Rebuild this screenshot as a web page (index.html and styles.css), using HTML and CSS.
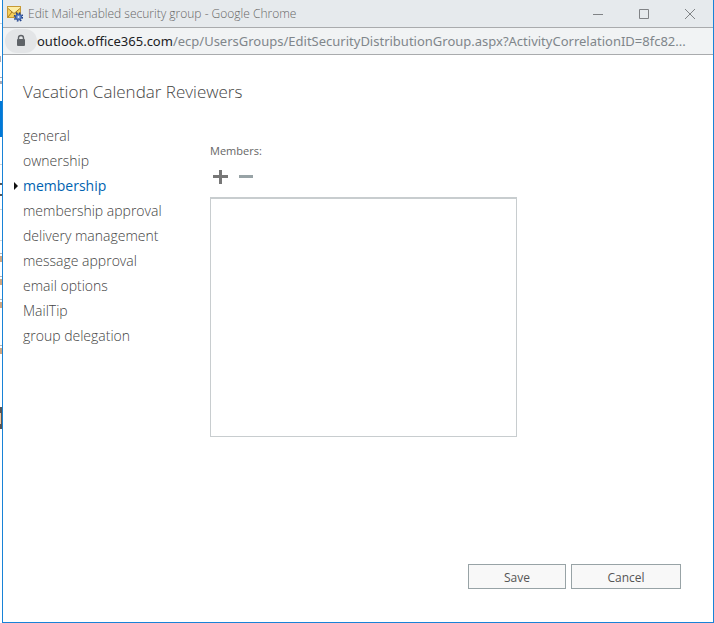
FILE: index.html
```html
<!DOCTYPE html>
<html lang="en">
<head>
  <meta charset="UTF-8" />
  <meta name="viewport" content="width=device-width, initial-scale=1" />
  <title>Edit Mail-enabled security group</title>
  <link rel="stylesheet" href="styles.css">
</head>
<body>
  <!-- edge of the page behind the popup -->
  <svg class="backdrop" width="2" height="623" aria-hidden="true" shape-rendering="crispEdges">
    <path d="M0 23h2v1H0z" fill="#d0d4d8"/>
    <path d="M0 56h1v6H0zM0 77h2v1H0zM0 81h2v3H0z" fill="#a9a9b4"/>
    <path d="M0 101h2v36H0z" fill="#0078d7"/>
    <path d="M0 164h2v1H0zM0 209h2v1H0zM0 240h2v1H0z" fill="#d4d4d4"/>
    <path d="M0 183h2v2H0zM0 194h2v2H0z" fill="#555"/>
    <path d="M0 253h2v1H0zM0 276h2v1H0zM0 299h2v1H0zM0 345h2v1H0z" fill="#b5b5b5"/>
    <path d="M0 256h2v6H0zM0 279h2v6H0zM0 302h2v6H0zM0 348h2v6H0z" fill="#cfa57f"/>
    <path d="M0 407h2v22H0z" fill="#555"/>
    <path d="M0 413h1v11H0z" fill="#f2c9a0"/>
  </svg>

  <div class="window">
    <header class="titlebar">
      <svg class="app-icon" width="16" height="16" viewBox="0 0 16 16" aria-hidden="true">
        <rect x="0.5" y="0.5" width="13" height="11" fill="#f5cf5c" stroke="#c79a35"/>
        <path d="M1 1h12v2L7 7.500 1 3z" fill="#fdeea6"/>
        <path d="M1 2.500l6 5 6-5M1 11l4-5M13 11L9 6" stroke="#a87a1e" fill="none"/>
        <circle cx="11.500" cy="11" r="4" fill="none" stroke="#24458f" stroke-width="1.600" stroke-dasharray="1.600 1.540"/>
        <circle cx="11.500" cy="11" r="3" fill="#5f86c9" stroke="#2c4f9c"/>
        <circle cx="11.500" cy="11" r="1" fill="#e6eefc"/>
      </svg>
      <span class="title">Edit Mail-enabled security group - Google Chrome</span>
      <div class="window-buttons">
        <button type="button" aria-label="Minimize">
          <svg width="12" height="12" viewBox="0 0 12 12"><path d="M1 6.500h10"/></svg>
        </button>
        <button type="button" aria-label="Maximize">
          <svg width="12" height="12" viewBox="0 0 12 12"><path d="M1.500 1.500h9v9h-9z"/></svg>
        </button>
        <button type="button" aria-label="Close">
          <svg width="12" height="12" viewBox="0 0 12 12"><path d="M1 1l10 10M11 1L1 11"/></svg>
        </button>
      </div>
    </header>

    <div class="addressbar">
      <button type="button" class="site-info" aria-label="View site information">
        <svg width="12" height="14" viewBox="0 0 12 14">
          <path d="M3.500 6V4a2.500 2.500 0 0 1 5 0v2" fill="none" stroke="#5f6368" stroke-width="1.400"/>
          <rect x="2" y="5" width="8" height="7" rx="1" fill="#5f6368"/>
        </svg>
      </button>
      <div class="url"><span class="host">outlook.office365.com</span>/ecp/UsersGroups/EditSecurityDistributionGroup.aspx?ActivityCorrelationID=8fc82...</div>
    </div>

    <main class="page">
      <h1>Vacation Calendar Reviewers</h1>
      <div class="columns">
        <nav class="sections">
          <a href="#general">general</a>
          <a href="#ownership">ownership</a>
          <a href="#membership" class="selected">membership</a>
          <a href="#membership-approval">membership approval</a>
          <a href="#delivery-management">delivery management</a>
          <a href="#message-approval">message approval</a>
          <a href="#email-options">email options</a>
          <a href="#mailtip">MailTip</a>
          <a href="#group-delegation">group delegation</a>
        </nav>
        <section class="members">
          <label for="members">Members:</label>
          <div class="toolbar">
            <button type="button" aria-label="Add">
              <svg width="16" height="16" viewBox="0 0 16 16"><path d="M6 1h3v5h6v3H9v6H6V9H0V6h6z" fill="#777"/></svg>
            </button>
            <button type="button" aria-label="Remove">
              <svg width="16" height="16" viewBox="0 0 16 16"><path d="M0 6h14v3H0z" fill="#98a3a6"/></svg>
            </button>
          </div>
          <select id="members" multiple></select>
        </section>
      </div>
      <footer class="actions">
        <button type="submit" class="save">Save</button>
        <button type="button" class="cancel">Cancel</button>
      </footer>
    </main>
  </div>
</body>
</html>
```

FILE: styles.css
```css
* {
  box-sizing: border-box;
}
body {
  margin: 0;
  display: flex;
  min-height: 100vh;
  overflow: hidden;
  background: #fff;
  font-family: "Open Sans", "Noto Sans", sans-serif;
  color: #666;
}
button {
  font-family: inherit;
  cursor: pointer;
}
.backdrop {
  flex: none;
}
.window {
  flex: 1;
  min-width: 0;
  display: flex;
  flex-direction: column;
  border: 1px solid #1883d7;
  border-top: none;
}

/* browser frame */
.titlebar {
  display: flex;
  align-items: center;
  height: 28px;
  padding-left: 4px;
  background: #e6eaed;
  border-bottom: 1px solid #a9abad;
}
.title {
  flex: 1;
  margin-left: 5px;
  font-size: 12px;
  font-weight: 300;
  color: #666;
  white-space: nowrap;
}
.window-buttons {
  display: flex;
}
.window-buttons button {
  display: flex;
  align-items: center;
  justify-content: center;
  width: 46px;
  height: 27px;
  padding: 0;
  border: none;
  background: none;
}
.window-buttons path {
  fill: none;
  stroke: #808386;
}
.addressbar {
  display: flex;
  align-items: center;
  height: 27px;
  padding: 0 20px 0 2px;
  background: #f1f3f4;
  border-bottom: 1px solid #a9abad;
}
.site-info {
  display: flex;
  align-items: center;
  justify-content: center;
  flex: none;
  width: 32px;
  height: 24px;
  padding: 0;
  border: none;
  border-radius: 12px;
  background: #e3e5e7;
}
.url {
  font-family: "Noto Sans", sans-serif;
  font-size: 13px;
  color: #80868b;
  white-space: nowrap;
}
.host {
  color: #202124;
}

/* dialog page */
.page {
  flex: 1;
  display: flex;
  flex-direction: column;
  padding: 25px 32px 33px 20px;
}
h1 {
  margin: 0;
  font-size: 17px;
  line-height: 24px;
  font-weight: 300;
  color: #444;
}
.columns {
  display: flex;
  margin-top: 19px;
}
.sections {
  flex: none;
  width: 187px;
  display: flex;
  flex-direction: column;
}
.sections a {
  font-size: 14px;
  line-height: 25px;
  font-weight: 300;
  color: #444;
  text-decoration: none;
}
.sections .selected {
  position: relative;
  font-weight: 400;
  color: #0063b1;
}
.selected::before {
  content: "";
  position: absolute;
  left: -9px;
  top: 9px;
  border: 4px solid transparent;
  border-left: 4px solid #111;
  border-right: none;
}
.members {
  flex: 1;
  max-width: 307px;
  padding-top: 20px;
  display: flex;
  flex-direction: column;
}
.members label {
  font-size: 11px;
  line-height: 16px;
}
.toolbar {
  display: flex;
  gap: 10px;
  height: 38px;
  padding: 10px 3px;
}
.toolbar button {
  display: flex;
  height: 16px;
  padding: 0;
  border: none;
  background: none;
}
.members select {
  appearance: none;
  width: 100%;
  height: 240px;
  border: 1px solid #c8cdcf;
  border-top-width: 2px;
  border-radius: 0;
  background: #fff;
}
.actions {
  display: flex;
  justify-content: flex-end;
  gap: 5px;
  margin-top: auto;
}
.actions button {
  height: 25px;
  padding: 2px 0 0;
  border: 1px solid #98a3a6;
  background: #f8f8f8;
  font-size: 12px;
  color: #555;
}
.actions .save {
  width: 98px;
}
.actions .cancel {
  width: 110px;
}
```
